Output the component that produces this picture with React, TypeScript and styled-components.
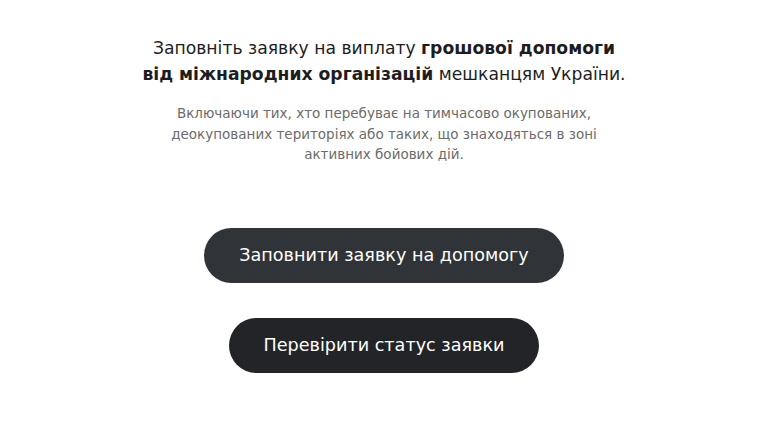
import React from 'react'
import styled, { createGlobalStyle } from 'styled-components'

const GlobalStyle = createGlobalStyle`
  html, body {
    margin: 0;
    padding: 0;
    background: #ffffff;
  }
  body {
    font-family: 'DejaVu Sans', 'Noto Sans', sans-serif;
  }
`

const Page = styled.div`
  width: 768px;
  height: 433px;
  display: flex;
  flex-direction: column;
  align-items: center;
  padding-top: 35px;
  box-sizing: border-box;
`

const Heading = styled.h1`
  margin: 0;
  font-size: 17.2px;
  line-height: 26px;
  font-weight: 400;
  color: #1d1d1f;
  text-align: center;
  b {
    font-weight: 700;
  }
`

const Note = styled.p`
  margin: 16px 0 0 0;
  font-size: 13.5px;
  line-height: 20.5px;
  color: #6b6b6b;
  text-align: center;
`

const Actions = styled.div`
  margin-top: 63px;
  display: flex;
  flex-direction: column;
  align-items: center;
  gap: 35px;
`

const Button = styled.button<{ $dark?: boolean }>`
  height: 55px;
  padding: 0 ${p => (p.$dark ? '35px' : '35px')};
  border: none;
  border-radius: 28px;
  background: ${p => (p.$dark ? '#222427' : '#303338')};
  color: #ffffff;
  font-family: 'DejaVu Sans', 'Noto Sans', sans-serif;
  font-size: 17.6px;
  font-weight: 400;
  cursor: pointer;
`

const App = () => {
  return (
    <Page>
      <GlobalStyle />
      <Heading>
        Заповніть заявку на виплату <b>грошової допомоги</b>
        <br />
        <b>від міжнародних організацій</b> мешканцям України.
      </Heading>
      <Note>
        Включаючи тих, хто перебуває на тимчасово окупованих,
        <br />
        деокупованих територіях або таких, що знаходяться в зоні
        <br />
        активних бойових дій.
      </Note>
      <Actions>
        <Button>Заповнити заявку на допомогу</Button>
        <Button $dark>Перевірити статус заявки</Button>
      </Actions>
    </Page>
  )
}

export default App
